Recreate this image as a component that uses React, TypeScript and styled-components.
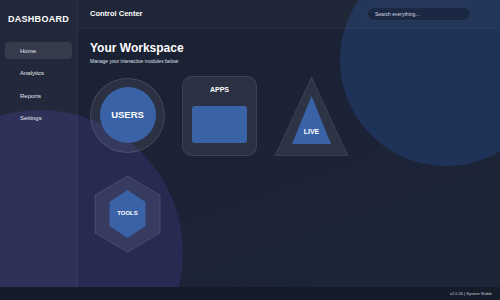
import styled, { createGlobalStyle } from "styled-components";

const Global = createGlobalStyle`
    body {
        margin: 0;
        background: #1a2133;
        font-family: "Liberation Sans", Arial, sans-serif;
    }
`;

const Page = styled.div`
    position: relative;
    width: 500px;
    height: 300px;
    overflow: hidden;
    background: linear-gradient(160deg, #1a2133 0%, #1c2336 60%, #1d2539 100%);
    display: flex;
    flex-direction: column;
    color: #fff;
`;

const Blob = styled.div<{ $size: number; $x: number; $y: number; $color: string }>`
    position: absolute;
    left: ${p => p.$x - p.$size / 2}px;
    top: ${p => p.$y - p.$size / 2}px;
    width: ${p => p.$size}px;
    height: ${p => p.$size}px;
    border-radius: 50%;
    background: ${p => p.$color};
    pointer-events: none;
`;

const Body = styled.div`
    position: relative;
    flex: 1;
    display: flex;
    min-height: 0;
`;

const Sidebar = styled.aside`
    width: 78px;
    flex-shrink: 0;
    background: rgba(255, 255, 255, 0.035);
    border-right: 1px solid rgba(255, 255, 255, 0.05);
    display: flex;
    flex-direction: column;
    padding: 0 5px;
    box-sizing: border-box;
`;

const Brand = styled.div`
    font-weight: bold;
    font-size: 9px;
    letter-spacing: 0.3px;
    line-height: 1;
    text-align: center;
    padding: 15px 0 18px;
`;

const NavItem = styled.div<{ $active?: boolean }>`
    height: 17px;
    display: flex;
    align-items: center;
    padding-left: 15px;
    margin-bottom: 5.5px;
    font-size: 6px;
    color: #e6e8ee;
    border-radius: 4px;
    background: ${p => (p.$active ? "rgba(255,255,255,0.09)" : "transparent")};
`;

const Main = styled.main`
    flex: 1;
    display: flex;
    flex-direction: column;
`;

const Header = styled.header`
    height: 28px;
    display: flex;
    align-items: center;
    justify-content: space-between;
    padding: 0 29px 0 12px;
    background: rgba(255, 255, 255, 0.025);
    border-bottom: 1px solid rgba(255, 255, 255, 0.03);
`;

const HeaderTitle = styled.div`
    font-size: 7.5px;
    font-weight: bold;
    margin-top: -1px;
`;

const Search = styled.div`
    width: 104px;
    height: 14px;
    box-sizing: border-box;
    border-radius: 7px;
    background: rgba(20, 30, 50, 0.55);
    border: 1px solid rgba(255, 255, 255, 0.07);
    font-size: 5px;
    color: #d8dce6;
    display: flex;
    align-items: center;
    padding-left: 7px;
`;

const Content = styled.section`
    padding: 12px 12px 0;
`;

const Title = styled.h1`
    margin: 0;
    font-size: 12px;
    font-weight: bold;
`;

const Subtitle = styled.p`
    margin: 3px 0 0;
    font-size: 5px;
    color: #dfe3ec;
`;

const Grid = styled.div`
    display: grid;
    grid-template-columns: repeat(3, 75px);
    grid-auto-rows: 80px;
    column-gap: 17px;
    row-gap: 18px;
    margin-top: 12px;
`;

const Cell = styled.div`
    position: relative;
    display: flex;
    align-items: center;
    justify-content: center;
`;

const Ring = styled.div`
    width: 75px;
    height: 75px;
    border-radius: 50%;
    box-sizing: border-box;
    background: rgba(255, 255, 255, 0.07);
    border: 1px solid rgba(255, 255, 255, 0.1);
    display: flex;
    align-items: center;
    justify-content: center;
    margin-top: -2px;
`;

const Disc = styled.div`
    width: 56px;
    height: 56px;
    border-radius: 50%;
    background: #3a62a6;
    display: flex;
    align-items: center;
    justify-content: center;
`;

const Label = styled.span<{ $size?: number }>`
    font-weight: bold;
    font-size: ${p => p.$size ?? 7}px;
    line-height: 1;
    color: #fff;
`;

const Card = styled.div`
    width: 75px;
    height: 80px;
    box-sizing: border-box;
    border-radius: 10px;
    background: rgba(255, 255, 255, 0.07);
    border: 1px solid rgba(255, 255, 255, 0.09);
    display: flex;
    flex-direction: column;
    align-items: center;
    padding-top: 9px;
`;

const Screen = styled.div`
    width: 55px;
    height: 37px;
    margin-top: 13px;
    border-radius: 3px;
    background: #3a62a6;
`;

const Shape = styled.svg`
    position: absolute;
    inset: 0;
    width: 100%;
    height: 100%;
`;

const ShapeLabel = styled.div<{ $top: number }>`
    position: absolute;
    left: 0;
    right: 0;
    top: ${p => p.$top}px;
    line-height: 1;
    font-size: 0;
    text-align: center;
`;

const Footer = styled.footer`
    position: relative;
    height: 13px;
    background: #161b29;
    display: flex;
    align-items: center;
    justify-content: flex-end;
    padding-right: 8px;
    font-size: 4px;
    color: #c9cdd7;
`;

export default function App() {
    return (
        <Page>
            <Global />
            <Blob $size={212} $x={446} $y={60} $color="#1f3358" />
            <Blob $size={286} $x={40} $y={253} $color="#272b52" />
            <Body>
                <Sidebar>
                    <Brand>DASHBOARD</Brand>
                    <NavItem $active>Home</NavItem>
                    <NavItem>Analytics</NavItem>
                    <NavItem>Reports</NavItem>
                    <NavItem>Settings</NavItem>
                </Sidebar>
                <Main>
                    <Header>
                        <HeaderTitle>Control Center</HeaderTitle>
                        <Search>Search everything...</Search>
                    </Header>
                    <Content>
                        <Title>Your Workspace</Title>
                        <Subtitle>Manage your interactive modules below</Subtitle>
                        <Grid>
                            <Cell>
                                <Ring>
                                    <Disc><Label $size={9.5}>USERS</Label></Disc>
                                </Ring>
                            </Cell>
                            <Cell>
                                <Card>
                                    <Label $size={7}>APPS</Label>
                                    <Screen />
                                </Card>
                            </Cell>
                            <Cell>
                                <Shape viewBox="0 0 75 80">
                                    <polygon points="37.5,1 74,80 1,80" fill="rgba(255,255,255,0.08)" stroke="rgba(255,255,255,0.1)" strokeWidth="1" />
                                    <polygon points="37.5,20 57,68 18,68" fill="#3a62a6" />
                                </Shape>
                                <ShapeLabel $top={52}><Label $size={7}>LIVE</Label></ShapeLabel>
                            </Cell>
                            <Cell>
                                <Shape viewBox="0 0 75 80">
                                    <polygon points="37.5,2 70,21 70,59 37.5,78 5,59 5,21" fill="rgba(255,255,255,0.08)" stroke="rgba(255,255,255,0.12)" strokeWidth="1" />
                                    <polygon points="37.5,16 55.5,28 55.5,52 37.5,64 19.5,52 19.5,28" fill="#3a62a6" />
                                </Shape>
                                <ShapeLabel $top={36}><Label $size={6}>TOOLS</Label></ShapeLabel>
                            </Cell>
                        </Grid>
                    </Content>
                </Main>
            </Body>
            <Footer>v2.0.26 | System Stable</Footer>
        </Page>
    );
}
